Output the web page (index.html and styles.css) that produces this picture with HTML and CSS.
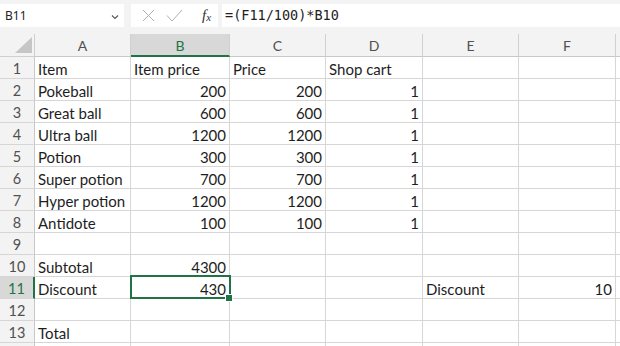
FILE: index.html
```html
<!DOCTYPE html>
<html lang="en">
<head>
    <meta charset="UTF-8">
    <title>Shop cart</title>
    <link rel="stylesheet" href="styles.css">
</head>
<body>

<div class="toolbar">
    <div class="name-box">
        <span>B11</span>
        <svg class="chevron" width="8" height="6" viewBox="0 0 8 6"><path d="M1 1.5 L4 4.5 L7 1.5" fill="none" stroke="#555" stroke-width="1.1"/></svg>
    </div>
    <div class="fx-box">
        <svg width="13" height="13" viewBox="0 0 13 13"><path d="M1 1 L12 12 M12 1 L1 12" stroke="#b0b0b0" stroke-width="1"/></svg>
        <svg width="17" height="13" viewBox="0 0 17 13"><path d="M1 6.5 L6 12 L16 1" fill="none" stroke="#b0b0b0" stroke-width="1"/></svg>
        <span class="fx">f<sub>x</sub></span>
    </div>
    <div class="formula">=(F11/100)*B10</div>
</div>

<div class="sheet">
    <div class="grid">
        <div class="corner"><svg width="17" height="16" viewBox="0 0 17 16"><path d="M17 0 L17 16 L0 16 Z" fill="#c6c6c6"/></svg></div>
        <div class="col-head">A</div>
        <div class="col-head active">B</div>
        <div class="col-head">C</div>
        <div class="col-head">D</div>
        <div class="col-head">E</div>
        <div class="col-head">F</div>
        <div class="col-head rest"></div>

        <div class="row-head">1</div><div class="cell">Item</div><div class="cell">Item price</div><div class="cell">Price</div><div class="cell">Shop cart</div><div class="cell"></div><div class="cell"></div><div class="cell rest"></div>
        <div class="row-head">2</div><div class="cell">Pokeball</div><div class="cell num">200</div><div class="cell num">200</div><div class="cell num">1</div><div class="cell"></div><div class="cell"></div><div class="cell rest"></div>
        <div class="row-head">3</div><div class="cell">Great ball</div><div class="cell num">600</div><div class="cell num">600</div><div class="cell num">1</div><div class="cell"></div><div class="cell"></div><div class="cell rest"></div>
        <div class="row-head">4</div><div class="cell">Ultra ball</div><div class="cell num">1200</div><div class="cell num">1200</div><div class="cell num">1</div><div class="cell"></div><div class="cell"></div><div class="cell rest"></div>
        <div class="row-head">5</div><div class="cell">Potion</div><div class="cell num">300</div><div class="cell num">300</div><div class="cell num">1</div><div class="cell"></div><div class="cell"></div><div class="cell rest"></div>
        <div class="row-head">6</div><div class="cell">Super potion</div><div class="cell num">700</div><div class="cell num">700</div><div class="cell num">1</div><div class="cell"></div><div class="cell"></div><div class="cell rest"></div>
        <div class="row-head">7</div><div class="cell">Hyper potion</div><div class="cell num">1200</div><div class="cell num">1200</div><div class="cell num">1</div><div class="cell"></div><div class="cell"></div><div class="cell rest"></div>
        <div class="row-head">8</div><div class="cell">Antidote</div><div class="cell num">100</div><div class="cell num">100</div><div class="cell num">1</div><div class="cell"></div><div class="cell"></div><div class="cell rest"></div>
        <div class="row-head">9</div><div class="cell"></div><div class="cell"></div><div class="cell"></div><div class="cell"></div><div class="cell"></div><div class="cell"></div><div class="cell rest"></div>
        <div class="row-head">10</div><div class="cell">Subtotal</div><div class="cell num">4300</div><div class="cell"></div><div class="cell"></div><div class="cell"></div><div class="cell"></div><div class="cell rest"></div>
        <div class="row-head active">11</div><div class="cell">Discount</div><div class="cell num selected">430<span class="handle"></span></div><div class="cell"></div><div class="cell"></div><div class="cell">Discount</div><div class="cell num">10</div><div class="cell rest"></div>
        <div class="row-head">12</div><div class="cell"></div><div class="cell"></div><div class="cell"></div><div class="cell"></div><div class="cell"></div><div class="cell"></div><div class="cell rest"></div>
        <div class="row-head">13</div><div class="cell">Total</div><div class="cell"></div><div class="cell"></div><div class="cell"></div><div class="cell"></div><div class="cell"></div><div class="cell rest"></div>
        <div class="row-head"></div><div class="cell"></div><div class="cell"></div><div class="cell"></div><div class="cell"></div><div class="cell"></div><div class="cell"></div><div class="cell rest"></div>
    </div>
</div>

</body>
</html>
```

FILE: styles.css
```css
body {
    margin: 0;
    padding: 0;
    width: 620px;
    height: 346px;
    overflow: hidden;
    background-color: #fff;
    font-family: Lato, "Noto Sans", sans-serif;
    color: #1e1e1e;
}
.toolbar {
    display: flex;
    height: 34px;
    padding-top: 4px;
    box-sizing: border-box;
    background-color: #f3f3f3;
}
.name-box {
    width: 124px;
    height: 23px;
    background-color: #fff;
    display: flex;
    align-items: center;
    justify-content: space-between;
    padding: 0 5px 0 5px;
    box-sizing: border-box;
    font-family: "Noto Sans", sans-serif;
    font-size: 12px;
    color: #222;
}
.chevron {
    margin-top: 2px;
}
.fx-box {
    width: 87px;
    height: 23px;
    margin-left: 7px;
    background-color: #fff;
    display: flex;
    align-items: center;
    box-sizing: border-box;
    padding-left: 11px;
    gap: 11px;
}
.fx {
    font-family: "Liberation Serif", serif;
    font-style: italic;
    font-size: 15px;
    color: #333;
    margin-left: 8px;
}
.fx sub {
    font-size: 11px;
    vertical-align: -1px;
}
.formula {
    flex: 1;
    height: 23px;
    margin-left: 4px;
    background-color: #fff;
    font-family: "DejaVu Sans Mono", monospace;
    font-size: 13.5px;
    line-height: 23px;
    padding-left: 3px;
    color: #222;
}
.sheet {
    height: 312px;
    overflow: hidden;
}
.grid {
    display: grid;
    grid-template-columns: 35px 96px 99px 96px 97px 96px 97px 20px;
    grid-template-rows: 23px repeat(14, 22px);
}
.corner, .col-head, .row-head, .cell {
    box-sizing: border-box;
    border-right: 1px solid #d6d6d6;
    border-bottom: 1px solid #d6d6d6;
}
.corner {
    background-color: #f3f3f3;
    border-color: #cfcfcf;
    display: flex;
    align-items: flex-end;
    justify-content: flex-end;
    padding: 0 2px 3px 0;
}
.col-head {
    background-color: #f3f3f3;
    border-bottom-color: #c8c8c8;
    border-right-color: #d0d0d0;
    text-align: center;
    font-size: 14px;
    line-height: 24px;
    color: #505050;
}
.col-head.active {
    background-color: #d8d8d8;
    border-bottom: 2px solid #217346;
    color: #217346;
}
.col-head.rest, .cell.rest {
    border-right: none;
}
.row-head {
    background-color: #f3f3f3;
    border-right-color: #c8c8c8;
    text-align: center;
    font-size: 14.5px;
    line-height: 24px;
    color: #505050;
}
.row-head.active {
    background-color: #d8d8d8;
    border-right: 2px solid #217346;
    color: #217346;
}
.cell {
    font-size: 15px;
    line-height: 24px;
    padding: 0 3px 0 3px;
    white-space: nowrap;
}
.cell.num {
    text-align: right;
}
.cell.selected {
    position: relative;
}
.cell.selected::after {
    content: "";
    position: absolute;
    left: -1px;
    top: -2px;
    right: -2px;
    bottom: -1px;
    border: 2px solid #217346;
}
.handle {
    position: absolute;
    right: -4px;
    bottom: -4px;
    width: 6px;
    height: 6px;
    background-color: #217346;
    border: 1px solid #fff;
    z-index: 2;
}
```
